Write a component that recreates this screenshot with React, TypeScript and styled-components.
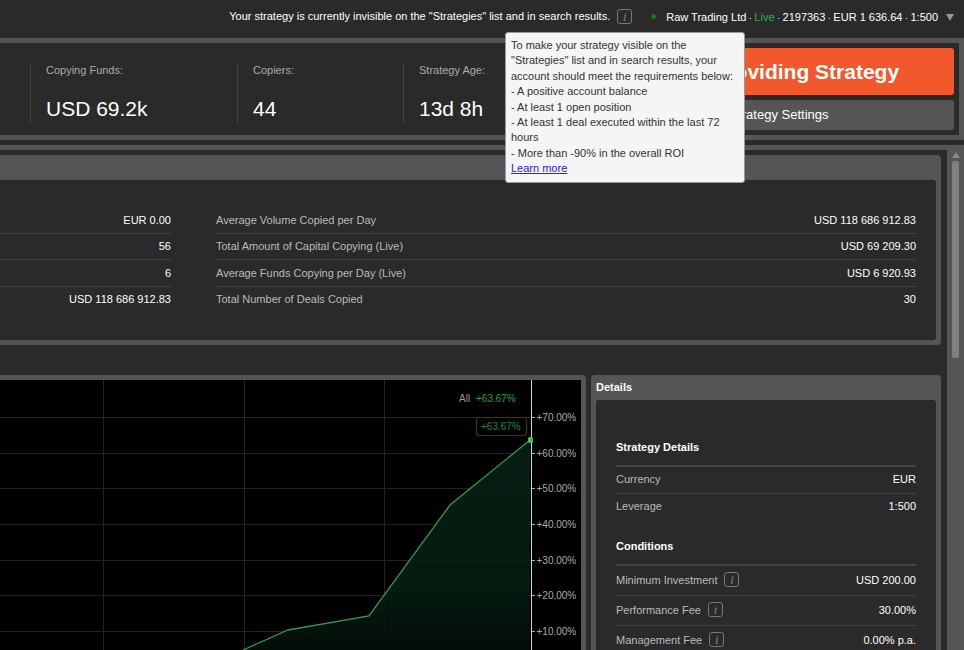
import React from "react";
import styled, { createGlobalStyle } from "styled-components";

const Global = createGlobalStyle`
  html, body { margin: 0; padding: 0; background: #2a2a2a; }
  body { font-family: "Liberation Sans", Arial, sans-serif; font-size: 11px; color: #fff; }
`;
const Page = styled.div`width: 964px; height: 650px; overflow: hidden; background: #2a2a2a;`;
const TopBar = styled.header`height: 38px; box-sizing: border-box; padding: 0 10px 6px 0; display: flex; align-items: center; justify-content: flex-end; color: #fff;`;
const Notice = styled.span`margin-right: 7px;`;
const Info = styled.span<{ $ml?: number; $mt?: number }>`
  display: inline-flex; align-items: center; justify-content: center; box-sizing: border-box;
  width: 15px; height: 15px; margin: ${p => p.$mt ?? 0}px 0 0 ${p => p.$ml ?? 0}px; border: 1px solid #777; border-radius: 3px;
  color: #808080; font: italic 13px "Liberation Serif", serif; line-height: 1;
`;
const Dot = styled.span`width: 5px; height: 5px; border-radius: 50%; background: #0d7a1c; margin: 1px 10px 0 19px;`;
const Account = styled.span`margin-top: 2px;`;
const Sep = styled.span`font-size: 9px;`;
const LiveText = styled.span`color: #22b845;`;
const Caret = styled.span`width: 0; height: 0; margin: 2px 0 0 8px; border-left: 4px solid transparent; border-right: 4px solid transparent; border-top: 7px solid #999;`;

const StatsPanel = styled.section`height: 102px; box-sizing: border-box; border: solid #555; border-width: 5px 5px 5px 0; display: flex; align-items: flex-start; padding: 0 5px 0 30px;`;
const Stat = styled.div<{ $w: number }>`width: ${p => p.$w}px; height: 60px; margin-top: 20px; box-sizing: border-box; border-left: 1px solid #444; padding-left: 15px;`;
const StatLabel = styled.div`color: #aaa; font-size: 11px; line-height: 14px;`;
const StatValue = styled.div`color: #fff; font-size: 21px; line-height: 26px; margin-top: 19px;`;
const Actions = styled.div`margin-left: auto; width: 361px; padding-top: 5px; display: flex; flex-direction: column; gap: 5px;`;
const PrimaryBtn = styled.div`height: 47px; box-sizing: border-box; padding-left: 12px; border-radius: 3px; background: #f1582c; color: #fff; font-weight: bold; font-size: 21px; display: flex; align-items: center; justify-content: center;`;
const SecondaryBtn = styled.div`height: 30px; box-sizing: border-box; padding: 0 0 2px 11px; border-radius: 3px; background: #555; color: #fff; font-size: 13px; display: flex; align-items: center; justify-content: center;`;

const Main = styled.div`margin-top: 5px; border-top: 5px solid #555; display: flex; height: 505px;`;
const Content = styled.div`flex: 1; min-width: 0; padding: 5px 6px 0 0;`;
const Scrollbar = styled.div`width: 17px; background: #555; display: flex; flex-direction: column; align-items: center;`;
const ArrowUp = styled.div`width: 0; height: 0; margin: 2px 0 1px; border-left: 4px solid transparent; border-right: 4px solid transparent; border-bottom: 6px solid #888;`;
const Thumb = styled.div`width: 7px; height: 197px; margin-top: 2px; background: #808080; border-radius: 2px;`;

const Card = styled.section`background: #555; border-radius: 0 4px 4px 0; padding: 0 5px 5px 0;`;
const CardHead = styled.div`height: 25px;`;
const CardBody = styled.div`background: #2a2a2a; border-radius: 0 3px 3px 0; height: 160px; box-sizing: border-box; padding: 27px 20px 0 0; display: flex; gap: 45px;`;
const LeftCol = styled.div`width: 171px; flex: none;`;
const RightCol = styled.div`flex: 1;`;
const Row = styled.div`height: 26.5px; box-sizing: border-box; display: flex; align-items: center; justify-content: space-between; border-bottom: 1px solid #444; &:last-child { border-bottom: 0; padding-bottom: 1.5px; }`;
const Label = styled.span`color: #bbb; display: inline-flex; align-items: center;`;
const Value = styled.span`color: #fff; margin-left: auto;`;

const Lower = styled.div`display: flex; gap: 5px; margin-top: 30px;`;
const ChartCard = styled.section`width: 586px; flex: none; box-sizing: border-box; background: #555; padding: 5px 5px 0 0; border-radius: 0 4px 0 0; height: 275px;`;
const DetailsCard = styled.section`flex: 1; background: #555; border-radius: 4px 4px 0 0; padding: 0 5px; height: 275px;`;
const DetailsTitle = styled.div`height: 25px; line-height: 24px; font-weight: bold; color: #fff;`;
const DetailsBody = styled.div`background: #2a2a2a; border-radius: 3px 3px 0 0; height: 250px; padding: 40px 20px 0; box-sizing: border-box; overflow: hidden;`;
const Heading = styled.h3<{ $mt?: number }>`margin: ${p => p.$mt ?? 0}px 0 0; font-size: 11px; line-height: 14px; font-weight: bold; color: #fff; padding-bottom: 11px; border-bottom: 2px solid #444;`;
const DetailRow = styled.div<{ $h: number; $plain?: boolean }>`height: ${p => p.$h}px; box-sizing: content-box; display: flex; align-items: center; justify-content: space-between; border-bottom: ${p => (p.$plain ? "0" : "1px solid #444")};`;
const RowInner = styled.div`display: flex; align-items: center; justify-content: space-between; width: 100%; margin-top: -2px;`;

const Tooltip = styled.div`position: absolute; left: 505px; top: 32px; width: 240px; height: 151px; box-sizing: border-box; background: #f5f5f5; border: 1px solid #999; border-radius: 3px; padding: 5px; color: #333; font-size: 11px; line-height: 15.4px;`;
const LearnMore = styled.a`color: #2222ee; text-decoration: underline;`;

const ys = [37, 73, 108, 144, 180, 215, 251];
const pct = ["+70.00%", "+60.00%", "+50.00%", "+40.00%", "+30.00%", "+20.00%", "+10.00%"];
const font = "Liberation Sans, sans-serif";

function Chart() {
  return (
    <svg width="581" height="270" viewBox="0 0 581 270" style={{ display: "block", background: "#000" }}>
      <defs>
        <linearGradient id="fill" x1="0" y1="0" x2="0" y2="1">
          <stop offset="0" stopColor="#062014" />
          <stop offset="0.7" stopColor="#051d11" />
          <stop offset="1" stopColor="#030d08" />
        </linearGradient>
      </defs>
      {[103.5, 244.5, 384.5].map(x => <line key={x} x1={x} x2={x} y1="0" y2="270" stroke="#222228" />)}
      {ys.map(y => <line key={y} x1="0" x2="531" y1={y + 0.5} y2={y + 0.5} stroke="#222228" />)}
      <path d="M243 270 L288 250 L369 236 L450 125 L530 60 L530 270 Z" fill="url(#fill)" fillOpacity="0.92" />
      <path d="M243 270 L288 250 L369 236 L450 125 L530 60" fill="none" stroke="#36994b" strokeWidth="1.3" />
      <line x1="531.5" x2="531.5" y1="0" y2="270" stroke="#d5d5d5" />
      {ys.map((y, i) => (
        <g key={pct[i]}>
          <line x1="532" x2="535" y1={y + 0.5} y2={y + 0.5} stroke="#aaa" />
          <text x="536.5" y={y + 3.5} fontSize="10" fill="#aaa" fontFamily={font}>{pct[i]}</text>
        </g>
      ))}
      <rect x="528" y="57" width="5" height="6" rx="1.5" fill="#4cb85f" />
      <text x="459" y="22" fontSize="10" fill="#999" fontFamily={font}>All</text>
      <text x="476" y="22" fontSize="10" fill="#22a636" fontFamily={font}>+63.67%</text>
      <rect x="476.5" y="37.5" width="50" height="18" rx="3" fill="#000" stroke="#0f4d24" strokeWidth="1.2" />
      <text x="481" y="50" fontSize="10" fill="#1f8a3a" fontFamily={font}>+63.67%</text>
    </svg>
  );
}

export default function App() {
  return (
    <Page>
      <Global />
      <TopBar>
        <Notice>Your strategy is currently invisible on the "Strategies" list and in search results.</Notice>
        <Info $mt={1}>i</Info>
        <Dot />
        <Account>Raw Trading Ltd<Sep> · </Sep><LiveText>Live</LiveText><Sep> · </Sep>2197363<Sep> · </Sep>EUR 1 636.64<Sep> · </Sep>1:500</Account>
        <Caret />
      </TopBar>
      <StatsPanel>
        <Stat $w={207}><StatLabel>Copying Funds:</StatLabel><StatValue>USD 69.2k</StatValue></Stat>
        <Stat $w={166}><StatLabel>Copiers:</StatLabel><StatValue>44</StatValue></Stat>
        <Stat $w={120}><StatLabel>Strategy Age:</StatLabel><StatValue>13d 8h</StatValue></Stat>
        <Actions>
          <PrimaryBtn>Stop Providing Strategy</PrimaryBtn>
          <SecondaryBtn>Strategy Settings</SecondaryBtn>
        </Actions>
      </StatsPanel>
      <Main>
        <Content>
          <Card>
            <CardHead />
            <CardBody>
              <LeftCol>
                <Row><Value>EUR 0.00</Value></Row>
                <Row><Value>56</Value></Row>
                <Row><Value>6</Value></Row>
                <Row><Value>USD 118 686 912.83</Value></Row>
              </LeftCol>
              <RightCol>
                <Row><Label>Average Volume Copied per Day</Label><Value>USD 118 686 912.83</Value></Row>
                <Row><Label>Total Amount of Capital Copying (Live)</Label><Value>USD 69 209.30</Value></Row>
                <Row><Label>Average Funds Copying per Day (Live)</Label><Value>USD 6 920.93</Value></Row>
                <Row><Label>Total Number of Deals Copied</Label><Value>30</Value></Row>
              </RightCol>
            </CardBody>
          </Card>
          <Lower>
            <ChartCard><Chart /></ChartCard>
            <DetailsCard>
              <DetailsTitle>Details</DetailsTitle>
              <DetailsBody>
                <Heading>Strategy Details</Heading>
                <DetailRow $h={26}><RowInner><Label>Currency</Label><Value>EUR</Value></RowInner></DetailRow>
                <DetailRow $h={26} $plain><RowInner><Label>Leverage</Label><Value>1:500</Value></RowInner></DetailRow>
                <Heading $mt={19}>Conditions</Heading>
                <DetailRow $h={29}><RowInner><Label>Minimum Investment<Info $ml={7}>i</Info></Label><Value>USD 200.00</Value></RowInner></DetailRow>
                <DetailRow $h={29}><RowInner><Label>Performance Fee<Info $ml={7}>i</Info></Label><Value>30.00%</Value></RowInner></DetailRow>
                <DetailRow $h={29} $plain><RowInner><Label>Management Fee<Info $ml={7}>i</Info></Label><Value>0.00% p.a.</Value></RowInner></DetailRow>
              </DetailsBody>
            </DetailsCard>
          </Lower>
        </Content>
        <Scrollbar><ArrowUp /><Thumb /></Scrollbar>
      </Main>
      <Tooltip>
        To make your strategy visible on the "Strategies" list and in search results, your account should meet the requirements below:<br />
        - A positive account balance<br />
        - At least 1 open position<br />
        - At least 1 deal executed within the last 72 hours<br />
        - More than -90% in the overall ROI<br />
        <LearnMore href="#">Learn more</LearnMore>
      </Tooltip>
    </Page>
  );
}
